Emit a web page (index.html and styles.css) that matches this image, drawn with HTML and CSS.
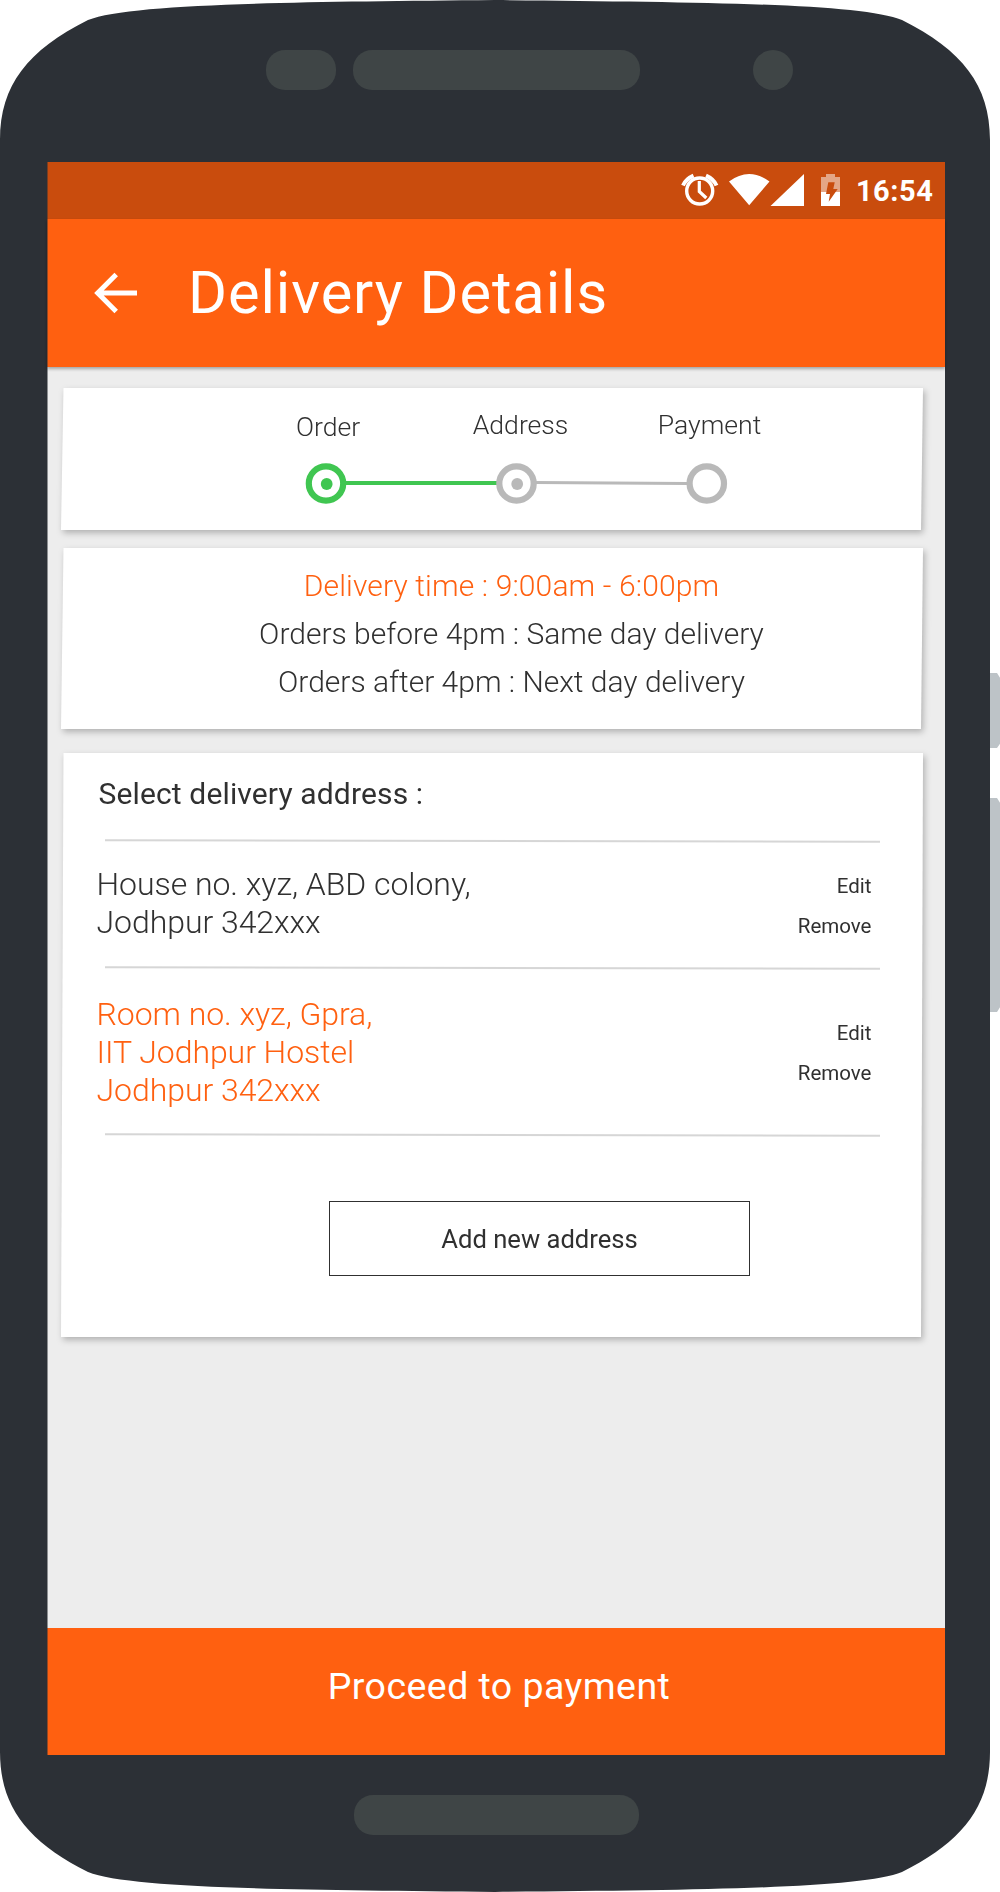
FILE: index.html
```html
<!DOCTYPE html>
<html lang="en">
<head>
<meta charset="utf-8">
<title>Delivery Details</title>
<link rel="stylesheet" href="styles.css">
</head>
<body>
<div class="phone">
  <svg class="shell" viewBox="0 0 1000 1892" aria-hidden="true">
    <path fill="#bdc3c7" d="M988 673h9l5 8v60l-5 7h-9zM988 798h9l5 8v198l-5 8h-9z"/>
    <path fill="#2c3036" d="M0 140C0 85 28 50 88 20C130 3 300 2 495 0C690 2 860 3 902 20C962 50 990 85 990 140V1752C990 1807 962 1842 902 1872C860 1889 690 1890 495 1892C300 1890 130 1889 88 1872C28 1842 0 1807 0 1752Z"/>
  </svg>
  <div class="bezel-top">
    <span class="slot sensor"></span>
    <span class="slot speaker"></span>
    <span class="slot camera"></span>
  </div>
  <main class="screen">
    <div class="status">
      <svg class="status-icons" width="160" height="34" viewBox="0 0 160 34" aria-hidden="true">
        <g fill="none" stroke="#fff">
          <circle cx="18.7" cy="18" r="13" stroke-width="3.4"/>
          <path stroke-width="3.2" d="M18.3 8v10.5l7 6.5"/>
          <path stroke-width="4" d="M2 12.5Q5 6 12.5 2.7M35.500 12.5Q32.5 6 25 2.700"/>
        </g>
        <path fill="#fff" d="M48 8.500Q68 -6.500 88.500 8.500L68.200 32.300zM89.500 33L123 1V33z"/>
        <path fill="#fff" fill-opacity=".5" d="M140 4h5V1h9v3h5v15h-19z"/>
        <path fill="#fff" d="M140 19h19v14h-19z"/>
        <path fill="#c94c0d" d="M147.300 9.300h6.400l-1.400 6.700h4.400l-9 12.700l1.300-7.700h-4z"/>
      </svg>
      <span class="clock">16:54</span>
    </div>
    <header class="appbar">
      <svg class="back" width="44" height="42" viewBox="0 0 44 42" aria-hidden="true">
        <path fill="none" stroke="#fff" stroke-width="5" d="M44 21H4.700M23.200 2.500L4.700 21l18.500 18.500"/>
      </svg>
      <h1 class="title">Delivery Details</h1>
    </header>
    <div class="content">
      <section class="card steps">
        <div class="labels">
          <span class="l-order">Order</span><span class="l-address">Address</span><span class="l-payment">Payment</span>
        </div>
        <svg class="track" width="424" height="43" viewBox="0 0 424 43" aria-hidden="true">
          <path stroke="#40c651" stroke-width="4" d="M40 21H194"/>
          <path stroke="#b9b9b9" stroke-width="3" d="M230 20.500L382 21.500"/>
          <g fill="none" stroke-width="6.200">
            <circle cx="21" cy="21.500" r="17.200" stroke="#40c651"/>
            <circle cx="211.500" cy="21.500" r="17.200" stroke="#b9b9b9"/>
            <circle cx="401.800" cy="21.500" r="17.200" stroke="#b9b9b9"/>
          </g>
          <circle cx="21.700" cy="22" r="5.900" fill="#40c651"/>
          <circle cx="212.200" cy="22" r="5.900" fill="#b9b9b9"/>
        </svg>
      </section>
      <section class="card times">
        <p class="accent hours">Delivery time : 9:00am - 6:00pm</p>
        <p>Orders before 4pm : Same day delivery</p>
        <p>Orders after 4pm : Next day delivery</p>
      </section>
      <section class="card addresses">
        <h2>Select delivery address :</h2>
        <div class="rule"></div>
        <div class="row first">
          <p class="address">House no. xyz, ABD colony,<br>Jodhpur 342xxx</p>
          <div class="actions"><span>Edit</span><span>Remove</span></div>
        </div>
        <div class="rule"></div>
        <div class="row second">
          <p class="address accent">Room no. xyz, Gpra,<br>IIT Jodhpur Hostel<br>Jodhpur 342xxx</p>
          <div class="actions"><span>Edit</span><span>Remove</span></div>
        </div>
        <div class="rule"></div>
        <button class="add">Add new address</button>
      </section>
    </div>
    <button class="proceed">Proceed to payment</button>
  </main>
  <div class="bezel-bottom"><span class="slot speaker"></span></div>
</div>
</body>
</html>
```
FILE: styles.css
```css
* { box-sizing: border-box; }
body { margin: 0; background: #fff; font-family: Roboto, "Liberation Sans", sans-serif; color: #303030; }
h1, h2, p { margin: 0; font-weight: inherit; }
button { border: 0; padding: 0; background: none; color: inherit; font: inherit; }

.phone { position: relative; width: 1000px; height: 1892px; overflow: hidden; display: flex; flex-direction: column; }
.shell { position: absolute; inset: 0; width: 1000px; height: 1892px; }
.bezel-top, .bezel-bottom, .screen { position: relative; }
.bezel-top { height: 162px; display: flex; padding: 50px 0 0 266px; }
.slot { display: block; height: 40px; border-radius: 19px; background: #3f4546; }
.sensor { width: 70px; margin-right: 17px; }
.speaker { width: 287px; }
.camera { width: 40px; border-radius: 50%; margin-left: 113px; }
.bezel-bottom { padding: 40px 0 0 354px; }
.bezel-bottom .speaker { width: 285px; }

.screen { width: 898px; height: 1593px; margin-left: 47px; background: #ededed; display: flex; flex-direction: column; }
.screen::after { content: ""; position: absolute; left: 0; top: 0; bottom: 0; width: 1px; background: rgba(44,48,54,.5); }
.status { height: 57px; background: #c94c0d; display: flex; justify-content: flex-end; padding: 11px 11.4px 0 0; color: #fff; }
.status-icons { margin-right: 15px; }
.clock { font-size: 29px; line-height: 36px; font-weight: 700; letter-spacing: .6px; }
.appbar { position: relative; height: 148px; background: #ff6010; color: #fff; display: flex; padding: 53px 0 0 46px; box-shadow: 0 2px 3px rgba(0,0,0,.3); }
.title { font-size: 59.5px; line-height: 70px; letter-spacing: .93px; margin: -14px 0 0 51px; white-space: nowrap; }

.content { flex: 1; padding: 21px 0 0 14px; }
.card { position: relative; width: 862px; filter: drop-shadow(2px 3px 3px rgba(0,0,0,.25)); }
.card::before { content: ""; position: absolute; inset: 0; background: #fff; clip-path: polygon(2.5px 0, 100% 0, calc(100% - 2px) 100%, 0 100%); }
.card > * { position: relative; }
.steps { height: 142px; padding: 21px 0 0 244px; margin-bottom: 18px; }
.labels { display: flex; font-size: 26.6px; line-height: 32px; font-weight: 300; height: 53px; }
.l-order { margin: 2px 112.5px 0 -9px; }
.l-address { margin-right: 89.5px; }
.track { display: block; }
.times { height: 181px; padding: 14px 0 0 39px; margin-bottom: 24px; text-align: center; font-size: 30px; line-height: 48px; font-weight: 300; }
.accent { color: #ff6010; }
.hours { letter-spacing: .13px; }
.addresses { height: 584px; padding-top: 25px; }
h2 { font-size: 30px; line-height: 32px; height: 62px; padding-left: 37.5px; letter-spacing: .14px; }
.rule { width: 775px; height: 1.5px; margin-left: 44px; background: #d6d6d6; transform: rotate(.1deg); }
.row { display: flex; justify-content: space-between; padding: 0 51.5px 0 35.5px; }
.first { height: 125.5px; padding-top: 23px; }
.second { height: 165px; padding-top: 26.5px; }
.address { font-size: 32px; line-height: 38px; font-weight: 300; letter-spacing: -.05px; }
.actions { display: flex; flex-direction: column; align-items: flex-end; font-size: 20.5px; line-height: 40px; padding-top: 1px; }
.second .actions { padding-top: 18px; }
.add { display: block; width: 421px; height: 75px; margin: 66px 0 0 268px; border: 1.5px solid #303030; font-size: 25.6px; }
.proceed { height: 127px; background: #ff6010; color: #fff; font-size: 37.5px; letter-spacing: .45px; padding: 0 0 12px 6px; }
```
